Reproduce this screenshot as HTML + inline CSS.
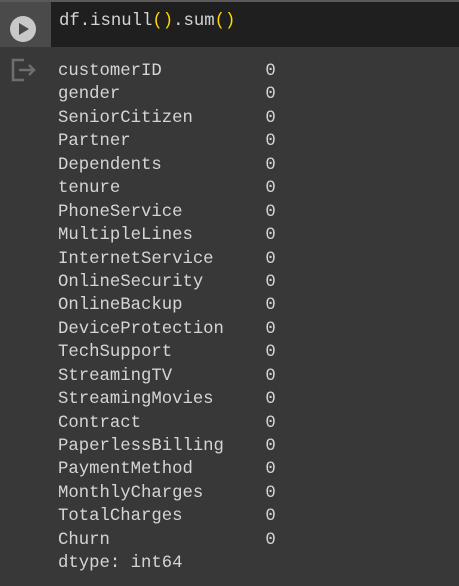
<!DOCTYPE html>
<html><head><style>
body{margin:0;width:459px;height:586px;background:#383838;overflow:hidden;position:relative;font-family:"Liberation Mono",monospace;}
#top{position:absolute;left:0;top:0;width:459px;height:2px;background:#5a5a5a;}
#gut{position:absolute;left:0;top:2px;width:51px;height:45px;background:#4a4a4a;}
#code{position:absolute;left:51px;top:2px;width:408px;height:45px;background:#1f1f1f;}
#code span.t{position:absolute;left:8px;top:10px;font-size:17.3px;color:#d4d4d4;white-space:pre;}
.y{color:#ffd700}
#out{position:absolute;left:58px;top:60px;font-size:17.3px;line-height:23.43px;color:#d5d5d5;white-space:pre;}
</style></head><body>
<div id="top"></div>
<div id="gut"></div>
<svg style="position:absolute;left:0;top:0" width="51" height="90">
<circle cx="23" cy="29" r="13" fill="#c8c8c8"/>
<polygon points="19,23 19,35 29,29" fill="#4a4a4a"/>
<path d="M24 60 H13 V80 H24" stroke="#6e6e6e" stroke-width="2.5" fill="none"/>
<path d="M19 70 H34 M29 65 L34 70 L29 75" stroke="#6e6e6e" stroke-width="2.5" fill="none"/>
</svg>
<div id="code"><span class="t">df.isnull<span class="y">()</span>.sum<span class="y">()</span></span></div>
<div id="out">customerID          0
gender              0
SeniorCitizen       0
Partner             0
Dependents          0
tenure              0
PhoneService        0
MultipleLines       0
InternetService     0
OnlineSecurity      0
OnlineBackup        0
DeviceProtection    0
TechSupport         0
StreamingTV         0
StreamingMovies     0
Contract            0
PaperlessBilling    0
PaymentMethod       0
MonthlyCharges      0
TotalCharges        0
Churn               0
dtype: int64</div>
</body></html>
